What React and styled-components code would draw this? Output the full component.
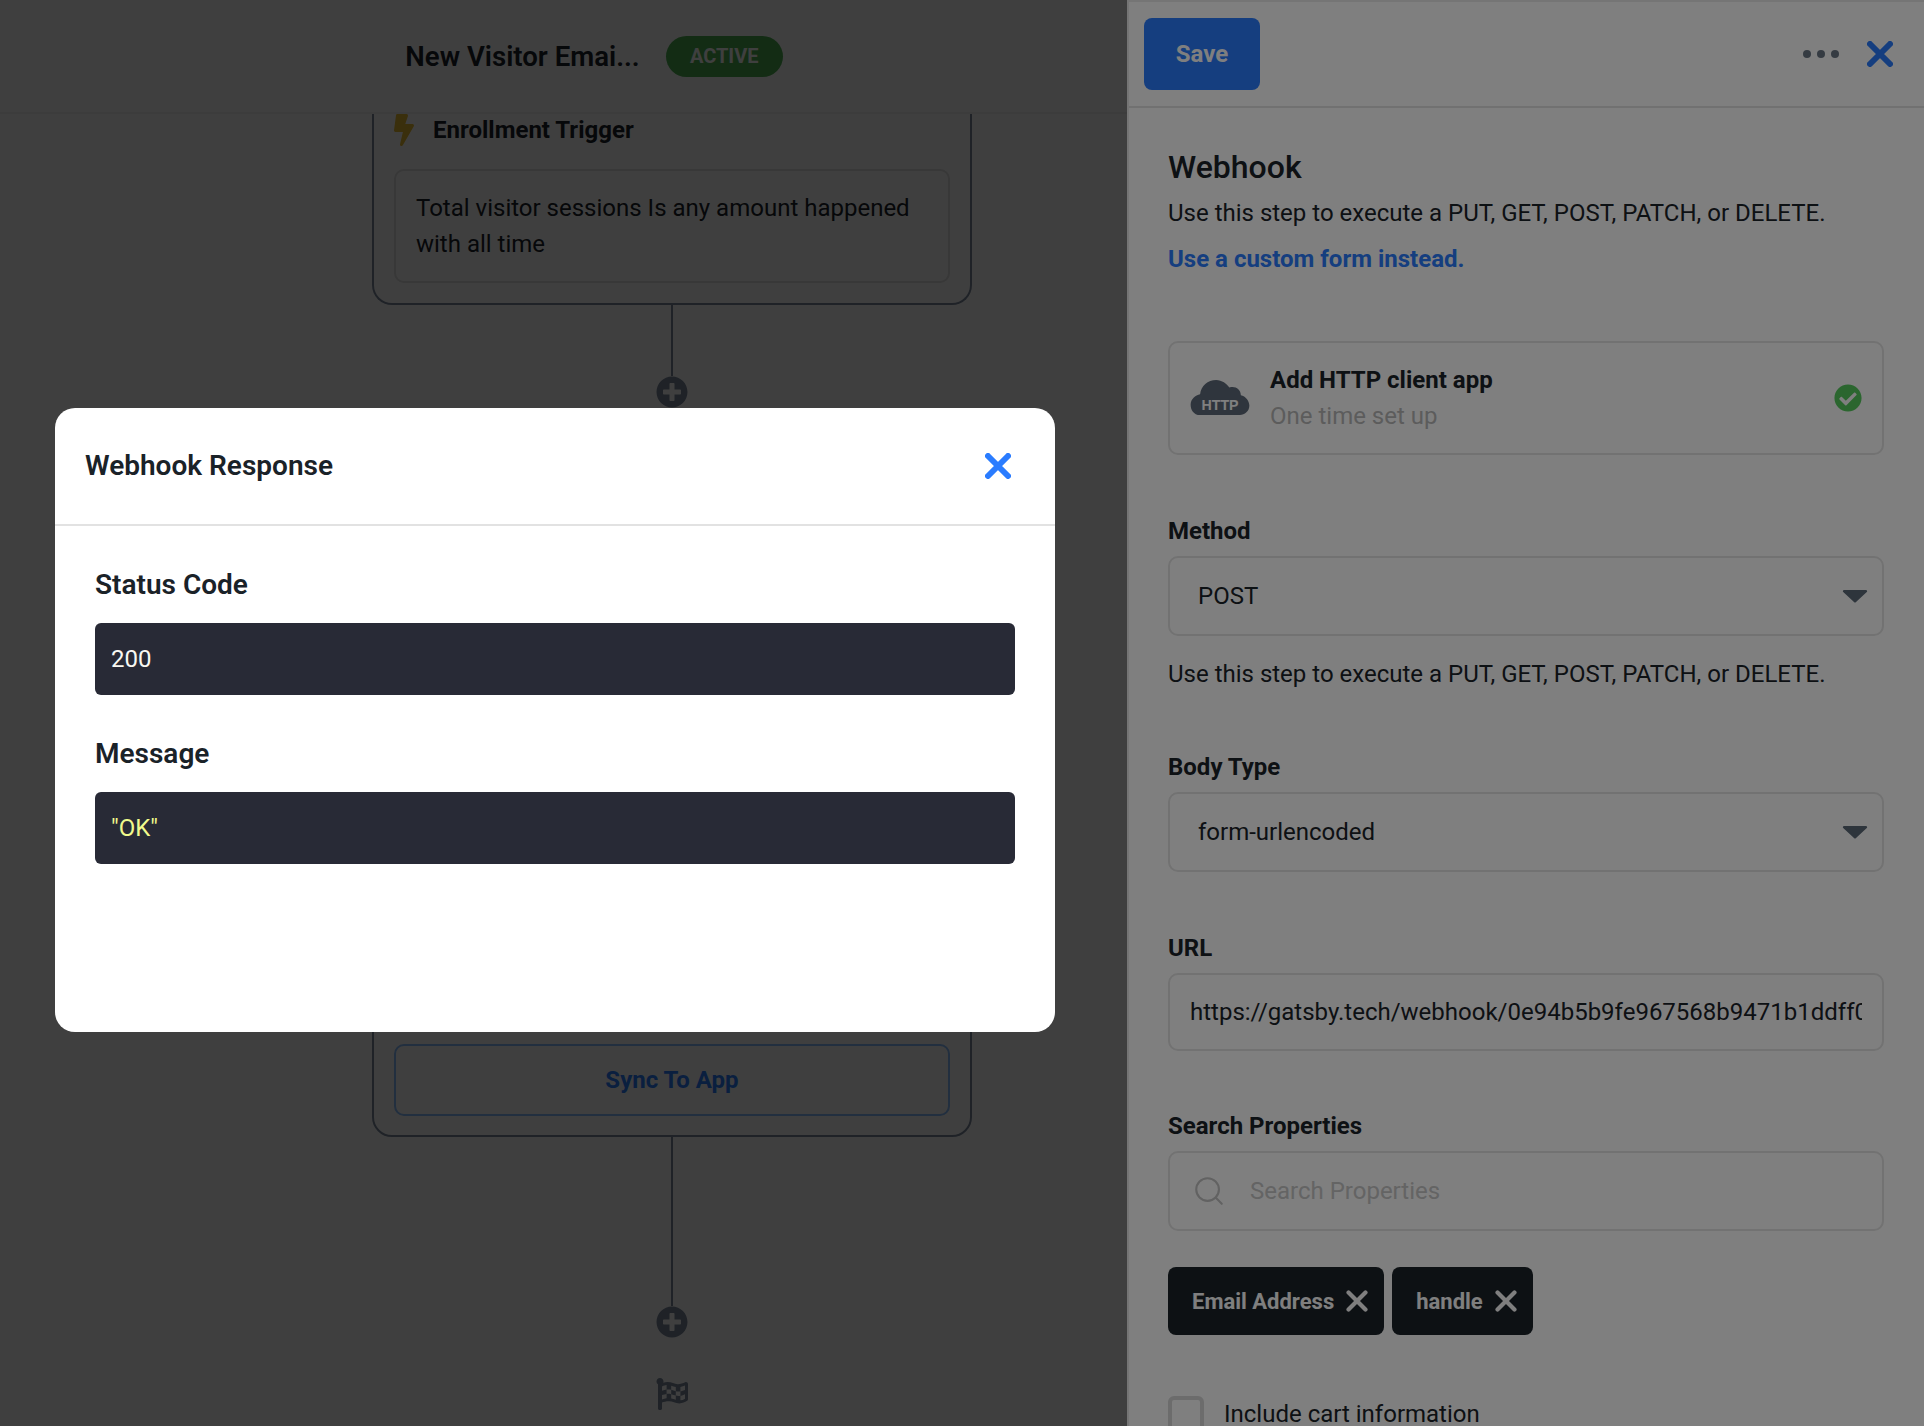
import React from "react";
import styled, { createGlobalStyle } from "styled-components";
import { FaBolt, FaCheckCircle, FaFlagCheckered, FaPlusCircle } from "react-icons/fa";
import { Search } from "lucide-react";

const GlobalStyle = createGlobalStyle`
  html, body {
    margin: 0;
    padding: 0;
    overflow: hidden;
  }
  * {
    box-sizing: border-box;
  }
`;

const Page = styled.div`
  position: relative;
  display: flex;
  width: 1924px;
  height: 1426px;
  overflow: hidden;
  background: #fff;
  font-family: Roboto, "Liberation Sans", sans-serif;
  color: #1a2228;
`;

const Canvas = styled.div`
  position: relative;
  width: 1127px;
  flex-shrink: 0;
  display: flex;
  flex-direction: column;
  overflow: hidden;
`;

const CanvasHeader = styled.header`
  height: 114px;
  flex-shrink: 0;
  display: flex;
  align-items: center;
  justify-content: center;
  gap: 26px;
  padding: 0 0 0 61px;
  border-bottom: 2px solid #f0f0f0;
`;

const FlowTitle = styled.h1`
  margin: 0;
  font-size: 27.6px;
  font-weight: 600;
`;

const StatusBadge = styled.span`
  display: flex;
  align-items: center;
  justify-content: center;
  width: 117px;
  height: 41px;
  border-radius: 21px;
  background: #4cb152;
  color: #fff;
  font-size: 20px;
  font-weight: 700;
`;

const Flow = styled.div`
  flex: 1;
  display: flex;
  flex-direction: column;
  align-items: center;
  padding-left: 217px;
`;

const FlowCard = styled.section`
  width: 600px;
  flex-shrink: 0;
  display: flex;
  flex-direction: column;
  justify-content: flex-end;
  min-height: ${(p) => p.$minHeight || 0}px;
  padding: 0 20px ${(p) => (p.$clipped ? 20 : 19)}px;
  border: 2px solid #7c8a9e;
  border-top: ${(p) => (p.$clipped ? "none" : "2px solid #7c8a9e")};
  border-radius: ${(p) => (p.$clipped ? "0 0 20px 20px" : "20px")};
`;

const TriggerRow = styled.div`
  height: 55px;
  display: flex;
  align-items: center;
  gap: 17px;
  margin-left: -2px;
  padding-bottom: 24px;
  font-size: 24px;
  font-weight: 700;
  svg {
    width: 24px;
    height: 32px;
    color: #e8bc30;
  }
`;

const TriggerBody = styled.div`
  padding: 19px 20px;
  border: 2px solid #e0e0e0;
  border-radius: 10px;
  font-size: 24px;
  line-height: 36px;
`;

const SyncButton = styled.button`
  height: 72px;
  border: 2px solid #88bcff;
  border-radius: 10px;
  background: none;
  color: #2a7cff;
  font: 700 24px Roboto, sans-serif;
`;

const Connector = styled.div`
  width: 2px;
  height: ${(p) => p.$height}px;
  flex-shrink: 0;
  background: #7c8a9e;
`;

const AddStep = styled(FaPlusCircle)`
  width: 32px;
  height: 32px;
  flex-shrink: 0;
  color: #7c8a9e;
`;

const FinishFlag = styled(FaFlagCheckered)`
  width: 32px;
  height: 32px;
  margin-top: 40px;
  flex-shrink: 0;
  color: #7c8a9e;
`;

// the drawer dims what is behind it, the modal dims both
const Backdrop = styled.div`
  position: absolute;
  inset: 0;
  background: rgba(0, 0, 0, 0.5);
`;

const Drawer = styled.aside`
  flex: 1;
  display: flex;
  flex-direction: column;
  min-width: 0;
  border-top: 2px solid #eaeaea;
  border-left: 2px solid #eaeaea;
`;

const DrawerHeader = styled.div`
  height: 106px;
  flex-shrink: 0;
  display: flex;
  align-items: center;
  padding: 0 31px 0 15px;
  border-bottom: 2px solid #e2e2e2;
`;

const SaveButton = styled.button`
  width: 116px;
  height: 72px;
  border: none;
  border-radius: 8px;
  background: #2a7cff;
  color: #fff;
  font: 700 24px Roboto, sans-serif;
`;

const Dots = styled.span`
  display: flex;
  gap: 6px;
  margin-left: auto;
  margin-right: 28px;
  i {
    width: 8px;
    height: 8px;
    border-radius: 50%;
    background: #6b7785;
  }
`;

const DrawerBody = styled.div`
  padding: 40px 40px 0 39px;
`;

const DrawerTitle = styled.h2`
  margin: 0 0 11px;
  font-size: 32px;
  line-height: 38px;
  font-weight: 500;
`;

const Help = styled.p`
  margin: ${(p) => p.$margin || 0};
  font-size: 24px;
  line-height: 32px;
`;

const CustomLink = styled.a`
  display: block;
  margin-top: 14px;
  font-size: 24px;
  line-height: 32px;
  font-weight: 700;
  color: #2a7cff;
`;

const AppCard = styled.div`
  height: 114px;
  margin-top: 66px;
  display: flex;
  align-items: center;
  padding: 0 20px;
  border: 2px solid #e4e4e4;
  border-radius: 10px;
  svg.check {
    width: 28px;
    height: 28px;
    margin-left: auto;
    color: #56cc5e;
  }
`;

const AppText = styled.div`
  margin-left: 20px;
  font-size: 24px;
  line-height: 36px;
  b {
    display: block;
    font-weight: 700;
  }
  span {
    color: #b9b9b9;
  }
`;

const Label = styled.label`
  display: block;
  margin: ${(p) => p.$top}px 0 9px;
  font-size: 24px;
  line-height: 32px;
  font-weight: 700;
`;

const Box = styled.div`
  height: ${(p) => p.$height}px;
  display: flex;
  align-items: center;
  justify-content: space-between;
  padding: 0 ${(p) => p.$right || 0}px 0 ${(p) => p.$left}px;
  border: 2px solid #e4e4e4;
  border-radius: 10px;
  font-size: 24px;
  white-space: nowrap;
  overflow: hidden;
`;

const InputValue = styled.span`
  flex: 1;
  min-width: 0;
  overflow: hidden;
`;

const SearchGlass = styled(Search)`
  width: 34px;
  height: 34px;
  margin-right: 24px;
  flex-shrink: 0;
  color: #c4c4c4;
  stroke-width: 1.5;
`;

const Placeholder = styled.span`
  margin-right: auto;
  color: #c8c8c8;
`;

const Tags = styled.div`
  display: flex;
  gap: 8px;
  margin-top: 36px;
`;

const Tag = styled.span`
  height: 68px;
  display: flex;
  align-items: center;
  gap: 12px;
  padding: 0 16px 0 24px;
  border-radius: 8px;
  background: #1a2228;
  color: #fff;
  font-size: 22px;
  font-weight: 700;
`;

const CheckRow = styled.div`
  display: flex;
  align-items: center;
  gap: 20px;
  margin-top: 61px;
  font-size: 24px;
`;

const CheckBox = styled.span`
  width: 36px;
  height: 36px;
  border: 4px solid #d8d8d8;
  border-radius: 6px;
`;

const Modal = styled.div`
  position: absolute;
  left: 55px;
  top: 408px;
  width: 1000px;
  height: 624px;
  border-radius: 20px;
  background: #fff;
`;

const ModalHeader = styled.div`
  height: 118px;
  display: flex;
  align-items: center;
  justify-content: space-between;
  padding: 0 44px 1px 30px;
  border-bottom: 2px solid #e2e2e2;
`;

const ModalTitle = styled.h3`
  margin: 0;
  font-size: 28px;
  font-weight: 600;
`;

const ModalBody = styled.div`
  padding: 40px 40px 0;
`;

const FieldLabel = styled.div`
  margin-bottom: 19px;
  font-size: 28px;
  line-height: 38px;
  font-weight: 600;
`;

const CodeBlock = styled.pre`
  height: 72px;
  margin: 0 0 40px;
  padding: 0 16px;
  border-radius: 6px;
  background: #282a36;
  color: ${(p) => p.$color};
  font: 400 24px/72px Roboto, sans-serif;
`;

const CloseIcon = ({ size = 26, color, weight = 6 }) => (
  <svg width={size} height={size} viewBox="0 0 26 26">
    <path d="M3 3 L23 23 M23 3 L3 23" stroke={color} strokeWidth={weight} strokeLinecap="round" fill="none" />
  </svg>
);

const Caret = () => (
  <svg width="26" height="14" viewBox="0 0 26 14">
    <path d="M2 1 H24 a1.2 1.2 0 0 1 .8 2 L14 13 a1.4 1.4 0 0 1 -2 0 L1.2 3 a1.2 1.2 0 0 1 .8 -2 Z" fill="#5c6a78" />
  </svg>
);

const HttpCloud = () => (
  <svg width="60" height="36" viewBox="0 0 62 38">
    <path
      d="M10 37 C3 37 0 31 0 26 C0 20 5 16 10 15 C11 6 18 0 27 0 C33 0 38 4 41 8 C47 6 53 10 53 16 C58 17 62 22 62 27 C62 33 57 37 52 37 Z"
      fill="#5f6b7a"
    />
    <text x="31" y="32" textAnchor="middle" fontFamily="Liberation Sans, sans-serif" fontSize="15" fontWeight="700" fill="#fff">
      HTTP
    </text>
  </svg>
);

const App = () => {
  return (
    <Page>
      <GlobalStyle />
      <Canvas>
        <CanvasHeader>
          <FlowTitle>New Visitor Emai...</FlowTitle>
          <StatusBadge>ACTIVE</StatusBadge>
        </CanvasHeader>
        <Flow>
          <FlowCard $clipped>
            <TriggerRow>
              <FaBolt />
              Enrollment Trigger
            </TriggerRow>
            <TriggerBody>Total visitor sessions Is any amount happened with all time</TriggerBody>
          </FlowCard>
          <Connector $height={71} />
          <AddStep />
          <Connector $height={16} />
          <FlowCard $minHeight={713}>
            <SyncButton>Sync To App</SyncButton>
          </FlowCard>
          <Connector $height={169} />
          <AddStep />
          <FinishFlag />
        </Flow>
        <Backdrop />
      </Canvas>
      <Drawer>
        <DrawerHeader>
          <SaveButton>Save</SaveButton>
          <Dots>
            <i />
            <i />
            <i />
          </Dots>
          <CloseIcon color="#2a7cff" />
        </DrawerHeader>
        <DrawerBody>
          <DrawerTitle>Webhook</DrawerTitle>
          <Help>Use this step to execute a PUT, GET, POST, PATCH, or DELETE.</Help>
          <CustomLink>Use a custom form instead.</CustomLink>
          <AppCard>
            <HttpCloud />
            <AppText>
              <b>Add HTTP client app</b>
              <span>One time set up</span>
            </AppText>
            <FaCheckCircle className="check" />
          </AppCard>
          <Label $top={60}>Method</Label>
          <Box $height={80} $left={28} $right={14}>
            POST
            <Caret />
          </Box>
          <Help $margin="22px 0 0">Use this step to execute a PUT, GET, POST, PATCH, or DELETE.</Help>
          <Label $top={61}>Body Type</Label>
          <Box $height={80} $left={28} $right={14}>
            form-urlencoded
            <Caret />
          </Box>
          <Label $top={60}>URL</Label>
          <Box $height={78} $left={20} $right={20}>
            <InputValue>https://gatsby.tech/webhook/0e94b5b9fe967568b9471b1ddff0</InputValue>
          </Box>
          <Label $top={59}>Search Properties</Label>
          <Box $height={80} $left={22}>
            <SearchGlass />
            <Placeholder>Search Properties</Placeholder>
          </Box>
          <Tags>
            <Tag>
              Email Address
              <CloseIcon size={22} color="#fff" weight={5} />
            </Tag>
            <Tag>
              handle
              <CloseIcon size={22} color="#fff" weight={5} />
            </Tag>
          </Tags>
          <CheckRow>
            <CheckBox />
            Include cart information
          </CheckRow>
        </DrawerBody>
      </Drawer>
      <Backdrop />
      <Modal>
        <ModalHeader>
          <ModalTitle>Webhook Response</ModalTitle>
          <CloseIcon color="#2a7cff" />
        </ModalHeader>
        <ModalBody>
          <FieldLabel>Status Code</FieldLabel>
          <CodeBlock $color="#f8f8f2">200</CodeBlock>
          <FieldLabel>Message</FieldLabel>
          <CodeBlock $color="#f1fa8c">"OK"</CodeBlock>
        </ModalBody>
      </Modal>
    </Page>
  );
};

export default App;
